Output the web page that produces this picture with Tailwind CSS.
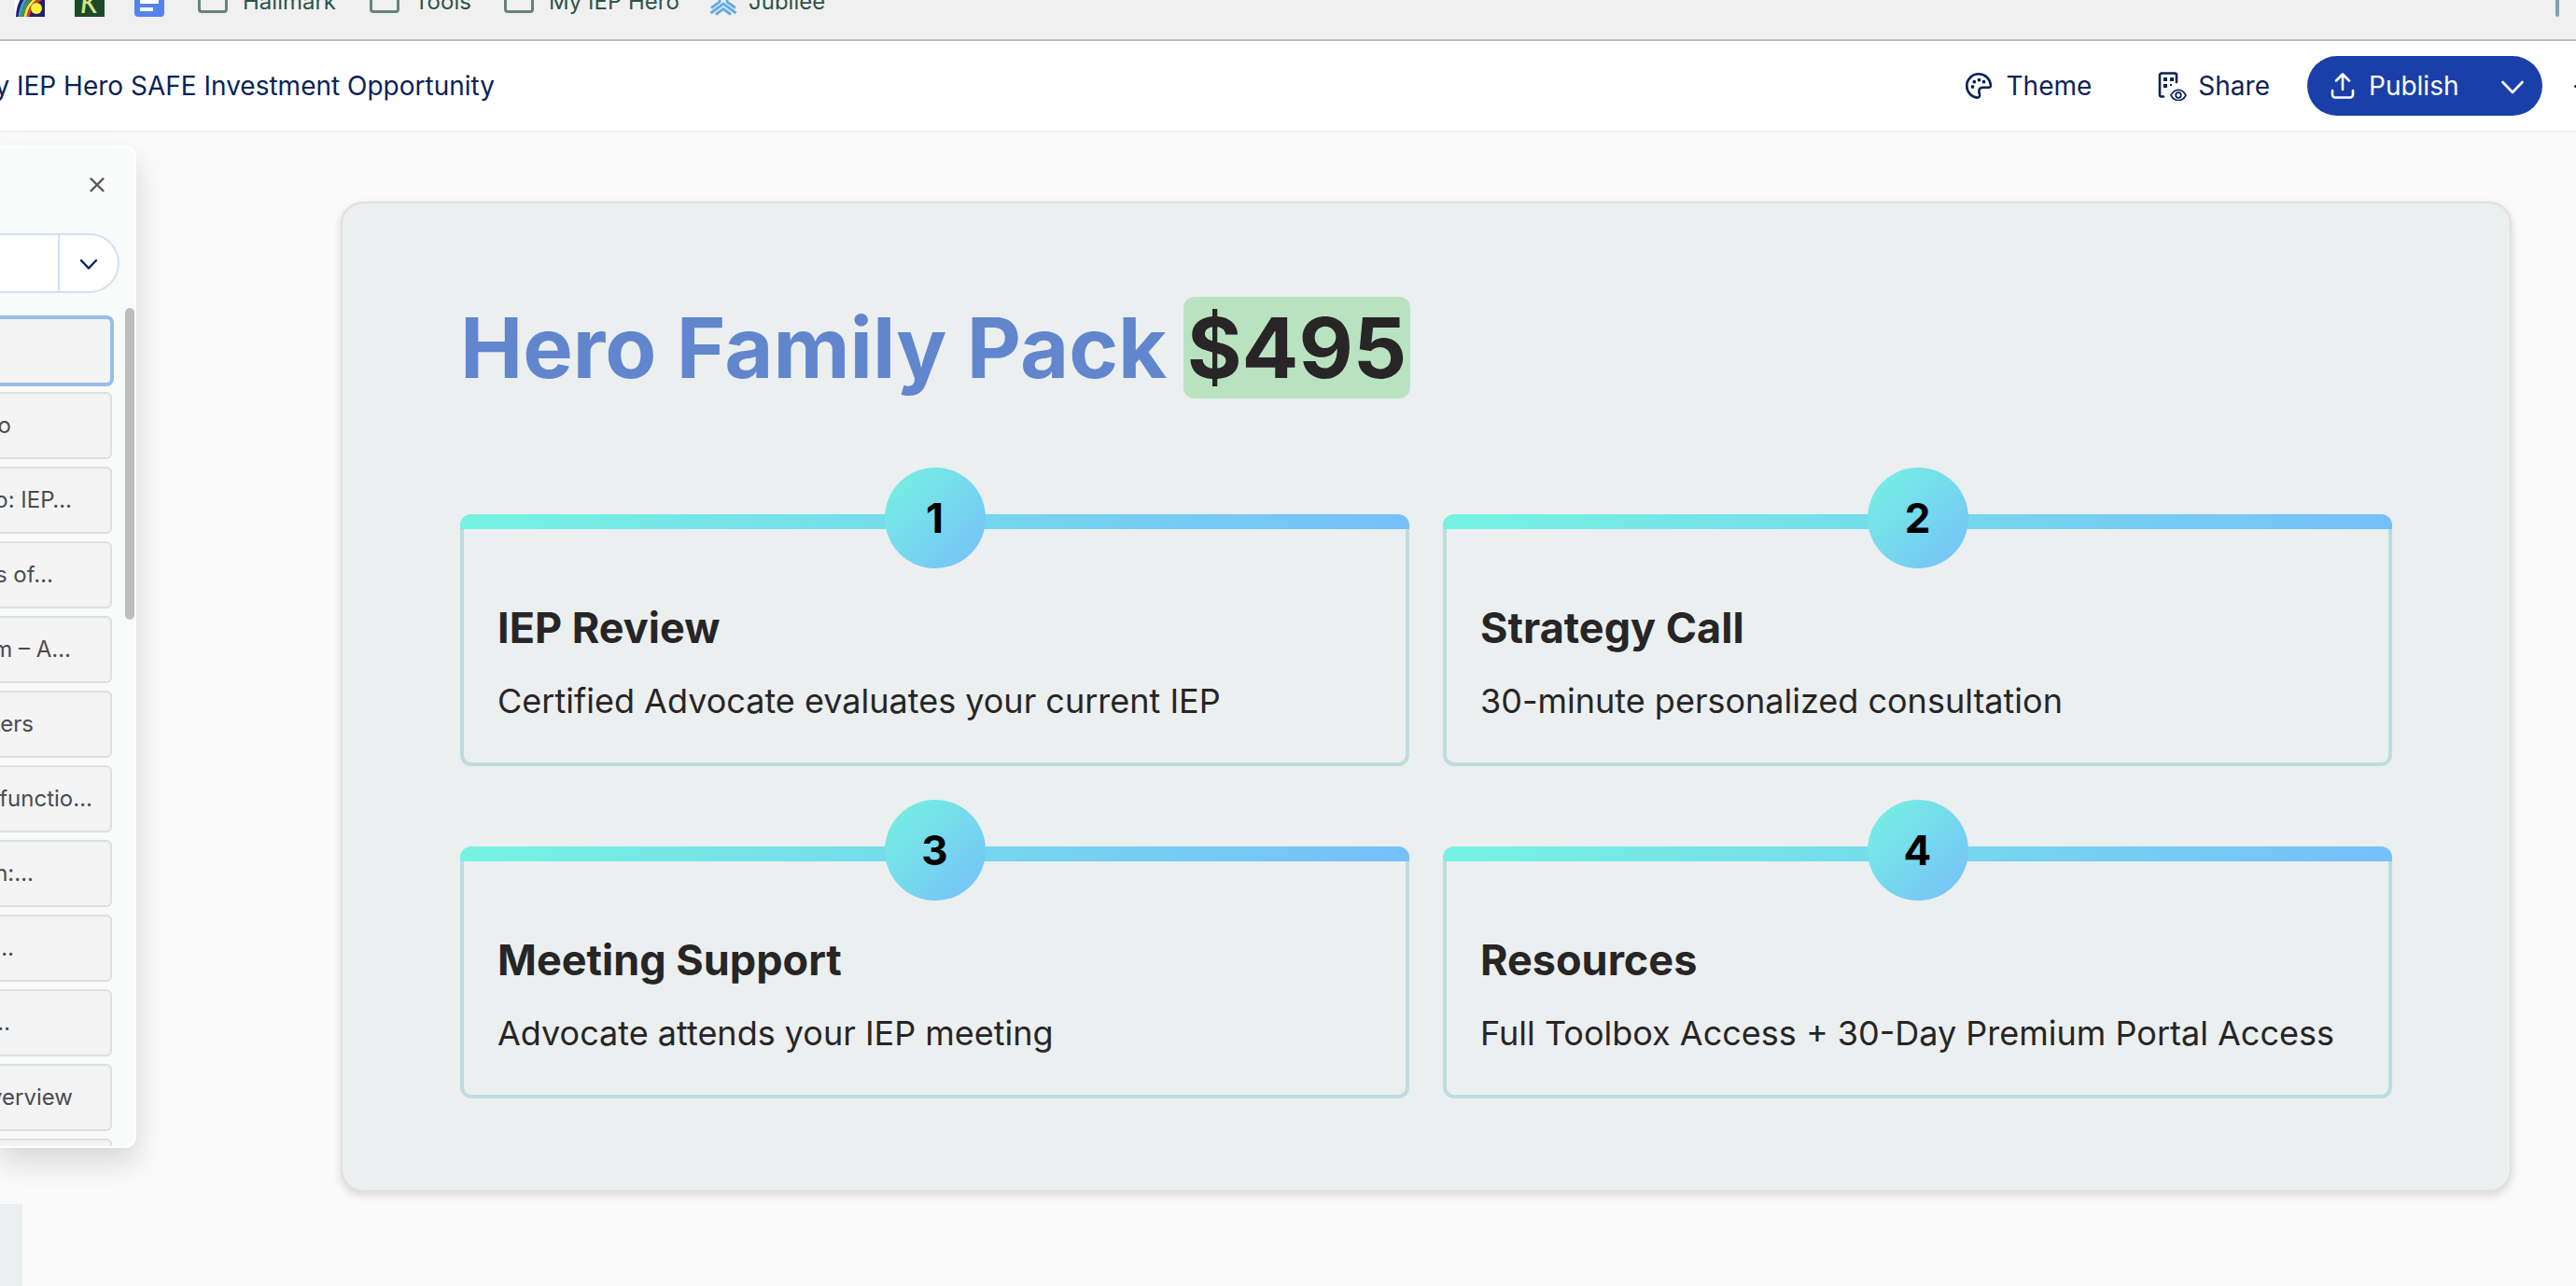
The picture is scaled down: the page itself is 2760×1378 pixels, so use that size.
<!DOCTYPE html>
<html lang="en">
<head>
<meta charset="utf-8">
<title>My IEP Hero SAFE Investment Opportunity</title>
<script src="https://cdn.jsdelivr.net/npm/@tailwindcss/browser@4"></script>
</head>
<body class="flex min-h-screen flex-col overflow-hidden bg-[#fafafa] font-['Inter',sans-serif]">

<!-- Bookmarks bar -->
<nav aria-label="Bookmarks" class="flex h-11 shrink-0 items-start overflow-hidden border-b-2 border-[#bcbebc] bg-[#f0f0f0] text-2xl text-[#2d5449]">
  <div class="-mt-[14px] flex h-8 w-full items-center pl-4">
    <a href="#" aria-label="Rainbow" class="mr-8">
      <svg class="size-8" viewBox="0 0 32 32"><rect width="32" height="32" fill="#fff"/><path d="M1 32C2 12 12 0 32-4V32Z" fill="#20206e"/><g fill="none" stroke-width="3"><path d="M5 32C7 16 15 4 32 0" stroke="#4a9ad8"/><path d="M8 32C10 18 17 8 32 4" stroke="#3f9a4b"/><path d="M11 32C13 20 19 12 32 8" stroke="#f1e33c"/><path d="M14 32C16 22 21 16 32 11" stroke="#dc3a2c"/></g><circle cx="23" cy="23" r="6" fill="#f8f23d"/></svg>
    </a>
    <a href="#" aria-label="K" class="mr-8">
      <svg class="size-8" viewBox="0 0 32 32"><rect width="32" height="32" fill="#1c4a27"/><text x="6" y="28" font-family="Lato,sans-serif" font-style="italic" font-size="30" font-weight="500" fill="#d5e382">K</text></svg>
    </a>
    <a href="#" aria-label="Docs" class="mr-9">
      <svg class="size-8" viewBox="0 0 32 32"><rect width="32" height="32" rx="4" fill="#5384ee"/><path d="M6 8h20v4H6zM6 14h20v4H6zM6 22h14v4H6z" fill="#fff"/></svg>
    </a>
    <a href="#" class="mr-9 flex w-[148px] items-center gap-4"><svg class="h-7 w-8 shrink-0 -mt-1" viewBox="0 0 32 28" fill="none" stroke="#648479" stroke-width="3"><path d="M1.500 5.500V24a2.500 2.500 0 0 0 2.500 2.500H28a2.500 2.500 0 0 0 2.500-2.500V5.500Z"/></svg>Hallmark</a>
    <a href="#" class="mr-9 flex w-[108px] items-center gap-4"><svg class="h-7 w-8 shrink-0 -mt-1" viewBox="0 0 32 28" fill="none" stroke="#648479" stroke-width="3"><path d="M1.500 5.500V24a2.500 2.500 0 0 0 2.500 2.500H28a2.500 2.500 0 0 0 2.500-2.500V5.500Z"/></svg>Tools</a>
    <a href="#" class="mr-8 flex w-[188px] items-center gap-4 whitespace-nowrap"><svg class="h-7 w-8 shrink-0 -mt-1" viewBox="0 0 32 28" fill="none" stroke="#648479" stroke-width="3"><path d="M1.500 5.500V24a2.500 2.500 0 0 0 2.500 2.500H28a2.500 2.500 0 0 0 2.500-2.500V5.500Z"/></svg>My IEP Hero</a>
    <a href="#" class="flex items-center gap-[10px]"><svg class="size-8 shrink-0" viewBox="0 0 32 32" fill="none" stroke="#64ace2" stroke-width="3"><path d="M11 8v8L2 22.500M19 8v8l9 6.500M15 8v6"/><path d="M1.500 28 15 18l13.500 10"/><path d="M7 29.500 15 23.500l8 6"/></svg>Jubilee</a>
    <span class="mr-[18px] ml-auto h-full w-1 rounded-b-sm bg-[#83a0ab]"></span>
  </div>
</nav>

<!-- Document header -->
<header class="flex h-[98px] shrink-0 items-center justify-between overflow-hidden border-b-2 border-[#f0f0f0] bg-white text-[28px] text-[#0b2355]">
  <h1 class="flex w-[530px] justify-end whitespace-nowrap">My IEP Hero SAFE Investment Opportunity</h1>
  <div class="flex items-center">
    <button class="mr-[70px] flex items-center gap-[14px]">
      <svg class="size-8" viewBox="0 0 32 32" fill="none" stroke="currentColor" stroke-width="2.600" stroke-linejoin="round"><path d="M16 3.300C9 3.300 3.300 9 3.300 16c0 6.500 4.600 11.600 10.500 12.600 2.500.4 3.800-1.500 3.200-3.600-.5-1.600-.9-2.700-.6-4.200.4-2 2-3.100 4.100-3.100h6c1.700 0 2.600-.8 2.400-2.600C28.300 8.500 22.800 3.300 16 3.300Z"/><g fill="currentColor" stroke="none"><circle cx="9.500" cy="17" r="1.900"/><circle cx="11.300" cy="11.700" r="1.900"/><circle cx="16.500" cy="9.700" r="1.900"/><circle cx="21.500" cy="11.700" r="1.900"/></g></svg>
      Theme
    </button>
    <button class="mr-10 flex items-center gap-3">
      <svg class="size-8" viewBox="0 0 32 32" fill="none" stroke="currentColor" stroke-width="2.600" stroke-linecap="round"><path d="M7 27.500H5a2 2 0 0 1-2-2V4.500a2 2 0 0 1 2-2h14a2 2 0 0 1 2 2V12"/><path d="M7 7h4v4H7zM14 7h4v4h-4zM7 14h4v4H7zM14 14h2v2h-2z" fill="currentColor" stroke="none"/><path d="M15 26c4-7.500 12-7.500 16 0-4 7.500-12 7.500-16 0Z" stroke-width="1.600"/><circle cx="23" cy="26" r="2.800" stroke-width="1.800"/></svg>
      Share
    </button>
    <div class="mr-[34px] flex h-16 w-[252px] items-center rounded-full bg-[#1b3fa9] text-white">
      <button class="flex h-full flex-1 items-center gap-3 pl-[22px]">
        <svg class="size-8" viewBox="0 0 32 32" fill="none" stroke="currentColor" stroke-width="2.600" stroke-linecap="round" stroke-linejoin="round"><path d="M16 20V3.500M9 10.500l7-7 7 7M5 21v4.500a3 3 0 0 0 3 3h16a3 3 0 0 0 3-3V21"/></svg>
        Publish
      </button>
      <button aria-label="Publish options" class="flex h-full w-16 items-center justify-center">
        <svg class="size-8" viewBox="0 0 32 32" fill="none" stroke="currentColor" stroke-width="2.600" stroke-linecap="round" stroke-linejoin="round"><path d="m5.500 12 10.500 11L26.500 12"/></svg>
      </button>
    </div>
    <span class="h-[3px] w-[2px] rounded-l-full bg-[#0b2355]"></span>
  </div>
</header>

<div class="flex flex-1">
  <div class="flex w-[146px] shrink-0 flex-col pt-[14px]">
    <!-- Outline panel -->
    <aside class="relative flex h-[1074px] flex-col overflow-hidden rounded-r-xl border-y-2 border-r-2 border-white bg-[#f9fbfa] text-2xl text-[#4b4c50] shadow-[0_16px_32px_rgba(0,0,0,0.14)]">
      <button aria-label="Close" class="mt-7 mr-7 shrink-0 self-end p-[3px] text-[#565656]">
        <svg class="size-[18px]" viewBox="0 0 18 18" fill="none" stroke="currentColor" stroke-width="2.400" stroke-linecap="round"><path d="m2.500 2.500 13 13m0-13-13 13"/></svg>
      </button>
      <div class="mt-10 mr-4 flex h-16 shrink-0 rounded-r-full border-y-2 border-r-2 border-[#d0e0fb] bg-white text-[#0b2355]">
        <button aria-label="New card" class="w-16 border-r-2 border-[#d0e0fb]"></button>
        <button aria-label="New card options" class="flex flex-1 items-center justify-center">
          <svg class="size-6" viewBox="0 0 24 24" fill="none" stroke="currentColor" stroke-width="2.400" stroke-linecap="round" stroke-linejoin="round"><path d="m4 9 8 8.500L20 9"/></svg>
        </button>
      </div>
      <div class="mt-[26px] mr-6 flex flex-col gap-2 whitespace-nowrap">
        <button aria-label="Current card" class="h-[72px] shrink-0 rounded-r-md border-y-2 border-r-2 border-[#98bee9] bg-[#f4f4f4] ring-2 ring-[#98bee9]"></button>
        <button class="flex h-[72px] shrink-0 items-center rounded-r-md border-y-2 border-r-2 border-[#dedfde] bg-[#f4f4f4]"><span class="flex w-[12px] justify-end">o</span></button>
        <button class="flex h-[72px] shrink-0 items-center rounded-r-md border-y-2 border-r-2 border-[#dedfde] bg-[#f4f4f4]"><span class="flex w-[77px] justify-end">o: IEP…</span></button>
        <button class="flex h-[72px] shrink-0 items-center rounded-r-md border-y-2 border-r-2 border-[#dedfde] bg-[#f4f4f4]"><span class="flex w-[57px] justify-end">s of…</span></button>
        <button class="flex h-[72px] shrink-0 items-center rounded-r-md border-y-2 border-r-2 border-[#dedfde] bg-[#f4f4f4]"><span class="flex w-[76px] justify-end">m – A…</span></button>
        <button class="flex h-[72px] shrink-0 items-center rounded-r-md border-y-2 border-r-2 border-[#dedfde] bg-[#f4f4f4]"><span class="flex w-[36px] justify-end">ters</span></button>
        <button class="flex h-[72px] shrink-0 items-center rounded-r-md border-y-2 border-r-2 border-[#dedfde] bg-[#f4f4f4]"><span class="flex w-[99px] justify-end">sfunctio…</span></button>
        <button class="flex h-[72px] shrink-0 items-center rounded-r-md border-y-2 border-r-2 border-[#dedfde] bg-[#f4f4f4]"><span class="flex w-[36px] justify-end">n:…</span></button>
        <button class="flex h-[72px] shrink-0 items-center rounded-r-md border-y-2 border-r-2 border-[#dedfde] bg-[#f4f4f4]"><span class="flex w-[15px] justify-end">…</span></button>
        <button class="flex h-[72px] shrink-0 items-center rounded-r-md border-y-2 border-r-2 border-[#dedfde] bg-[#f4f4f4]"><span class="flex w-[11px] justify-end">…</span></button>
        <button class="flex h-[72px] shrink-0 items-center rounded-r-md border-y-2 border-r-2 border-[#dedfde] bg-[#f4f4f4]"><span class="flex w-[78px] justify-end">verview</span></button>
        <button aria-label="Next card" class="h-[72px] shrink-0 rounded-r-md border-y-2 border-r-2 border-[#dedfde] bg-[#f4f4f4]"></button>
      </div>
      <span class="absolute top-[172px] right-0 h-[334px] w-[10px] rounded-full bg-[#bcbebc]"></span>
    </aside>
    <div class="mt-[60px] w-6 flex-1 bg-[#ebefef]"></div>
  </div>

  <!-- Slide -->
  <main class="flex-1 pt-[74px] pr-[69px] pb-[99px] pl-[219px]">
    <section class="rounded-3xl border-2 border-[#e2dfdf] bg-[#ebeff0] px-[126px] pt-[100px] pb-[98px] text-[#272525] shadow-[0_4px_10px_rgba(0,0,0,0.14)]">
      <h2 class="text-[90px] leading-[109px] font-bold whitespace-nowrap text-[#6186ce]">Hero Family Pack <span class="-ml-1 rounded-xl bg-[#b9e3c0] px-1 text-[#272525]">$495</span></h2>
      <div class="mt-[124px] grid grid-cols-2 gap-x-9 gap-y-[86px]">
        <article class="relative rounded-xl border-4 border-t-0 border-[#bedcdf] px-9 pt-[94px] pb-9">
          <div class="absolute inset-x-[-4px] top-0 h-4 rounded-t-xl bg-linear-[135deg,#75f3e1,#76bffa]"></div>
          <div class="absolute -top-[50px] left-1/2 flex size-[108px] -translate-x-1/2 items-center justify-center rounded-full bg-linear-[135deg,#75f3e1,#76bffa] text-[44px] font-bold text-black">1</div>
          <h3 class="text-[45px] leading-14 font-bold">IEP Review</h3>
          <p class="mt-5 text-[36px] leading-[60px]">Certified Advocate evaluates your current IEP</p>
        </article>
        <article class="relative rounded-xl border-4 border-t-0 border-[#bedcdf] px-9 pt-[94px] pb-9">
          <div class="absolute inset-x-[-4px] top-0 h-4 rounded-t-xl bg-linear-[135deg,#75f3e1,#76bffa]"></div>
          <div class="absolute -top-[50px] left-1/2 flex size-[108px] -translate-x-1/2 items-center justify-center rounded-full bg-linear-[135deg,#75f3e1,#76bffa] text-[44px] font-bold text-black">2</div>
          <h3 class="text-[45px] leading-14 font-bold">Strategy Call</h3>
          <p class="mt-5 text-[36px] leading-[60px]">30-minute personalized consultation</p>
        </article>
        <article class="relative rounded-xl border-4 border-t-0 border-[#bedcdf] px-9 pt-[94px] pb-9">
          <div class="absolute inset-x-[-4px] top-0 h-4 rounded-t-xl bg-linear-[135deg,#75f3e1,#76bffa]"></div>
          <div class="absolute -top-[50px] left-1/2 flex size-[108px] -translate-x-1/2 items-center justify-center rounded-full bg-linear-[135deg,#75f3e1,#76bffa] text-[44px] font-bold text-black">3</div>
          <h3 class="text-[45px] leading-14 font-bold">Meeting Support</h3>
          <p class="mt-5 text-[36px] leading-[60px]">Advocate attends your IEP meeting</p>
        </article>
        <article class="relative rounded-xl border-4 border-t-0 border-[#bedcdf] px-9 pt-[94px] pb-9">
          <div class="absolute inset-x-[-4px] top-0 h-4 rounded-t-xl bg-linear-[135deg,#75f3e1,#76bffa]"></div>
          <div class="absolute -top-[50px] left-1/2 flex size-[108px] -translate-x-1/2 items-center justify-center rounded-full bg-linear-[135deg,#75f3e1,#76bffa] text-[44px] font-bold text-black">4</div>
          <h3 class="text-[45px] leading-14 font-bold">Resources</h3>
          <p class="mt-5 text-[36px] leading-[60px]">Full Toolbox Access + 30-Day Premium Portal Access</p>
        </article>
      </div>
    </section>
  </main>
</div>
</body>
</html>
